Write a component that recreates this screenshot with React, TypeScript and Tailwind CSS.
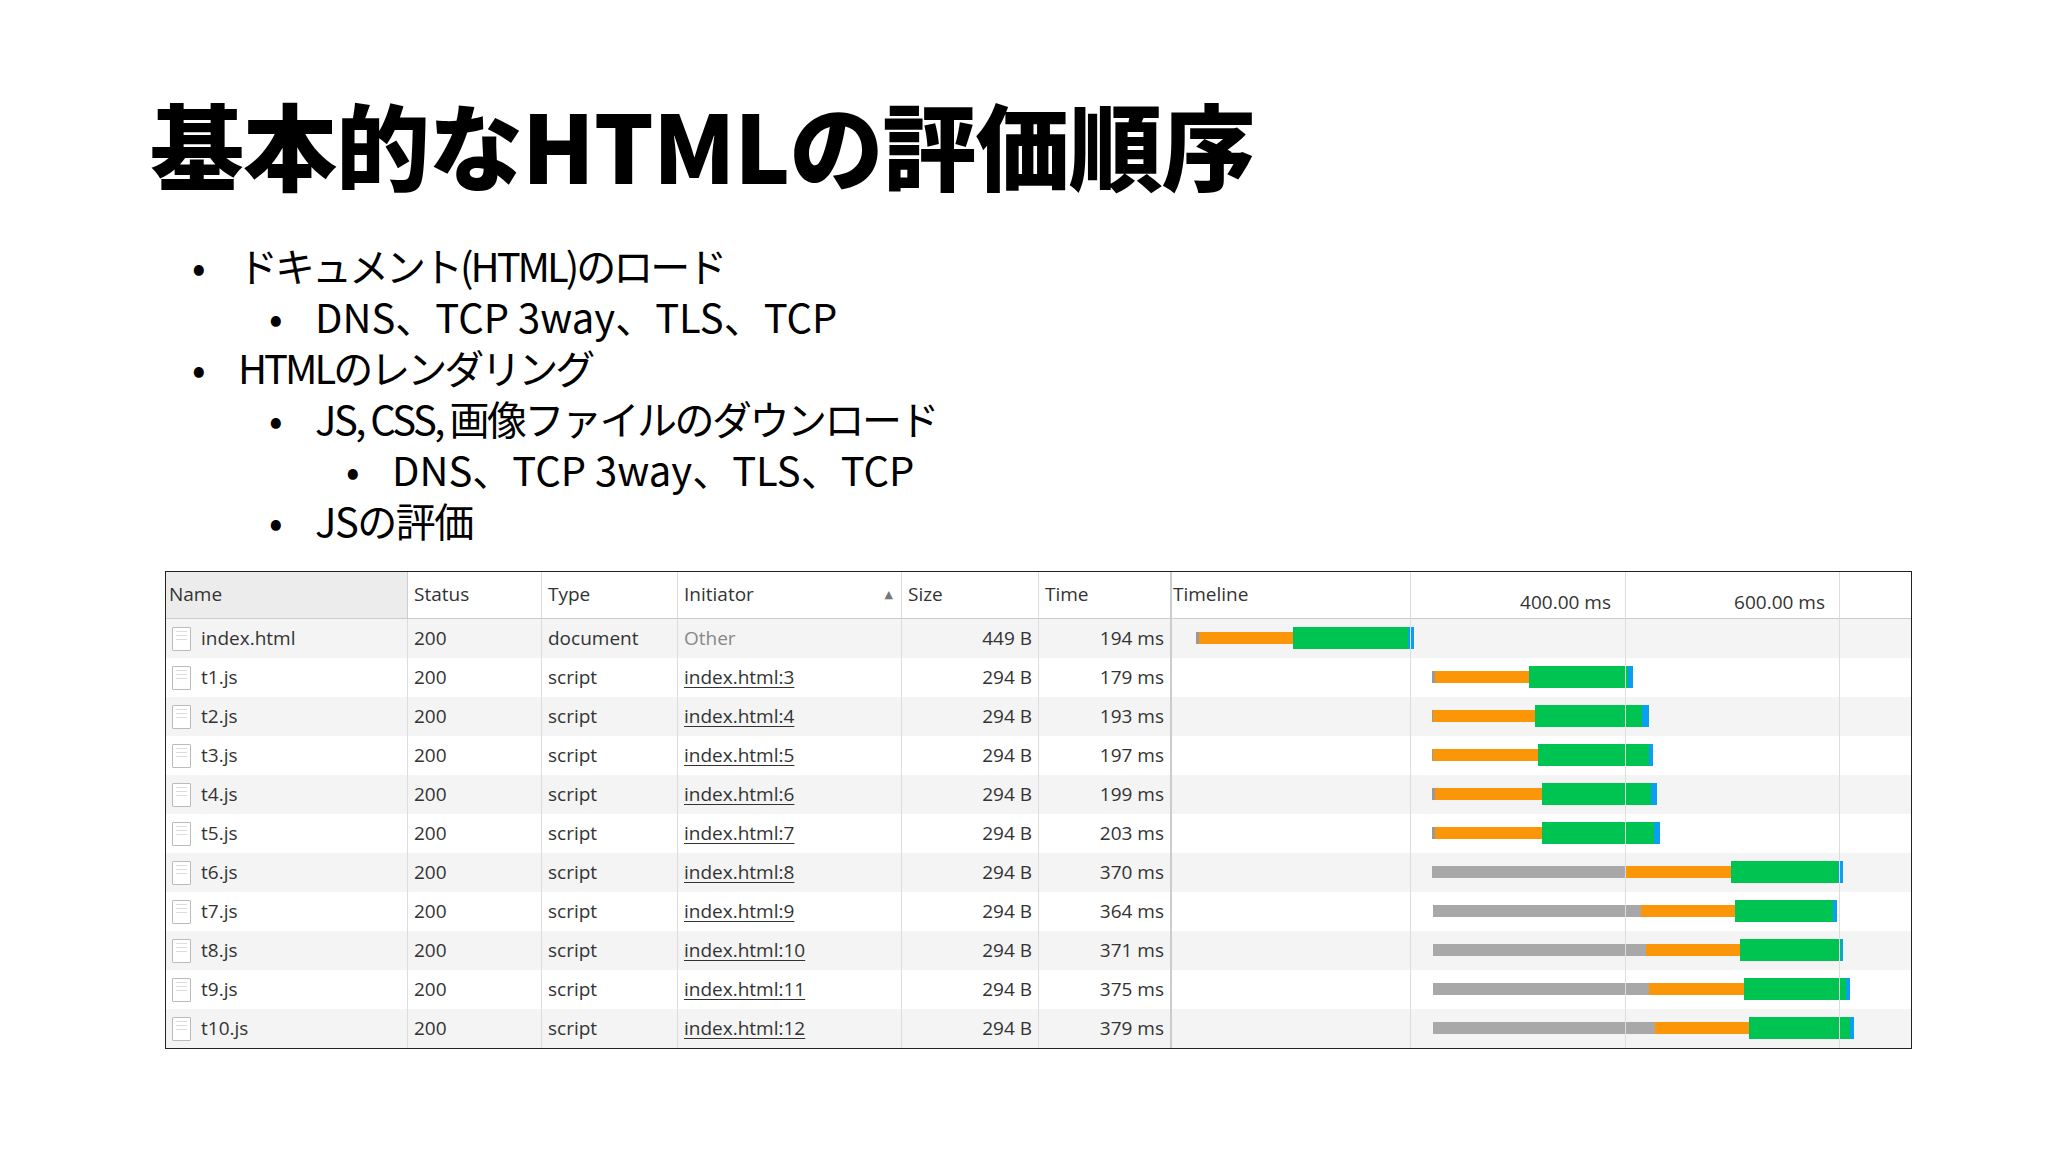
import React from "react";

const S = 1.306;
const rows = [
  { n: "index.html", t: "document", i: "Other", s: "449 B", tm: "194 ms", b: [915, 0, 918, 990, 1078, 1082] },
  { n: "t1.js", t: "script", i: "index.html:3", s: "294 B", tm: "179 ms", b: [1096, 0, 1098, 1170, 1246, 1250] },
  { n: "t2.js", t: "script", i: "index.html:4", s: "294 B", tm: "193 ms", b: [1096, 0, 1097, 1175, 1257, 1262] },
  { n: "t3.js", t: "script", i: "index.html:5", s: "294 B", tm: "197 ms", b: [1096, 0, 1097, 1177, 1262, 1265] },
  { n: "t4.js", t: "script", i: "index.html:6", s: "294 B", tm: "199 ms", b: [1096, 0, 1098, 1180, 1264, 1268] },
  { n: "t5.js", t: "script", i: "index.html:7", s: "294 B", tm: "203 ms", b: [1096, 0, 1098, 1180, 1266, 1271] },
  { n: "t6.js", t: "script", i: "index.html:8", s: "294 B", tm: "370 ms", b: [1096, 1, 1245, 1325, 1407, 1411] },
  { n: "t7.js", t: "script", i: "index.html:9", s: "294 B", tm: "364 ms", b: [1097, 1, 1256, 1328, 1403, 1406] },
  { n: "t8.js", t: "script", i: "index.html:10", s: "294 B", tm: "371 ms", b: [1097, 1, 1260, 1332, 1409, 1411] },
  { n: "t9.js", t: "script", i: "index.html:11", s: "294 B", tm: "375 ms", b: [1097, 1, 1262, 1335, 1413, 1416] },
  { n: "t10.js", t: "script", i: "index.html:12", s: "294 B", tm: "379 ms", b: [1097, 1, 1267, 1339, 1416, 1419] },
];
const X = (x: number) => (x - 897) * S;

function Bar({ b }: { b: number[] }) {
  const [st, grey, o, g, gEnd, bl] = b;
  return (
    <>
      <div className={`absolute ${grey ? "bg-[#a8a8a8]" : "bg-[#999]"}`} style={{ left: X(st), width: X(o) - X(st), top: 13, height: 12 }} />
      <div className="absolute bg-[#fb9608]" style={{ left: X(o), width: X(g) - X(o), top: 13, height: 12 }} />
      <div className="absolute bg-[#00c452]" style={{ left: X(g), width: X(gEnd) - X(g), top: 8, height: 22 }} />
      <div className="absolute bg-[#0a9ff0]" style={{ left: X(gEnd), width: X(bl) - X(gEnd), top: 8, height: 22 }} />
    </>
  );
}

const cols = "grid-cols-[242px_134px_136px_224px_137px_133px_1fr]";

const bullets: [number, number, string, number][] = [
  [196, 238, "ドキュメント(HTML)のロード", -3],
  [273, 315, "DNS、TCP 3way、TLS、TCP", 0],
  [196, 238, "HTMLのレンダリング", -3],
  [273, 315, "JS, CSS, 画像ファイルのダウンロード", -2.5],
  [350, 392, "DNS、TCP 3way、TLS、TCP", 0],
  [273, 315, "JSの評価", -1.5],
];

export default function App() {
  return (
    <div className="w-[2048px] h-[1152px] bg-white relative overflow-hidden" style={{ fontFamily: '"Noto Sans CJK JP", "Noto Sans", sans-serif' }}>
      <div className="absolute left-[150px] top-[96px] text-[94px] font-black leading-none tracking-[-1px] text-black">基本的なHTMLの評価順序</div>
      <div className="absolute left-0 top-[240px] text-[40px] text-black leading-[51px]">
        {bullets.map(([b, t, s, ls], i) => (
          <div key={i} className="relative h-[51px]">
            <span className="absolute" style={{ left: b - 4 }}>•</span>
            <span className="absolute whitespace-nowrap" style={{ left: t, letterSpacing: ls }}>{s}</span>
          </div>
        ))}
      </div>
      <div className="absolute left-[165px] top-[571px] w-[1747px] border border-[#222] text-[19px] text-[#333]" style={{ fontFamily: '"Open Sans", "DejaVu Sans", sans-serif' }}>
        <div className={`grid ${cols} h-[47px] border-b border-[#ccc]`}>
          <div className="bg-[#ececec] border-r border-[#ccc] pl-[3px] pt-[8px]">Name</div>
          <div className="border-r border-[#ddd] pl-[6px] pt-[8px]">Status</div>
          <div className="border-r border-[#ddd] pl-[6px] pt-[8px]">Type</div>
          <div className="border-r border-[#ddd] pl-[6px] pt-[8px] flex justify-between pr-[8px]"><span>Initiator</span><span className="text-[11px] text-[#777] pt-[6px]">▲</span></div>
          <div className="border-r border-[#ddd] pl-[6px] pt-[8px]">Size</div>
          <div className="border-r-2 border-[#ccc] pl-[6px] pt-[8px]">Time</div>
          <div className="relative pt-[8px]">
            <span className="pl-[1px]">Timeline</span>
            <span className="absolute top-[16px] right-[300px]">400.00 ms</span>
            <span className="absolute top-[16px] right-[86px]">600.00 ms</span>
          </div>
        </div>
        <div className="relative">
          {rows.map((r, i) => (
            <div key={i} className={`grid ${cols} h-[39px] items-center ${i % 2 === 0 ? "bg-[#f4f4f4]" : "bg-white"}`}>
              <div className="flex items-center h-full border-r border-[#ddd] pl-[6px] gap-[10px]">
                <div className="w-[19px] h-[24px] border border-[#bbb] bg-white rounded-[1px] flex flex-col gap-[3px] p-[3px]">
                  <div className="h-[1px] bg-[#ddd]" /><div className="h-[1px] bg-[#ddd]" /><div className="h-[1px] bg-[#ddd]" />
                </div>
                <span>{r.n}</span>
              </div>
              <div className="h-full flex items-center border-r border-[#ddd] pl-[6px]">200</div>
              <div className="h-full flex items-center border-r border-[#ddd] pl-[6px]">{r.t}</div>
              <div className={`h-full flex items-center border-r border-[#ddd] pl-[6px] ${i === 0 ? "text-[#888]" : "underline underline-offset-[3px]"}`}>{r.i}</div>
              <div className="h-full flex items-center justify-end border-r border-[#ddd] pr-[6px]">{r.s}</div>
              <div className="h-full flex items-center justify-end border-r-2 border-[#ccc] pr-[6px]">{r.tm}</div>
              <div className="h-full relative">
                <Bar b={r.b} />
              </div>
            </div>
          ))}
          <div className="absolute top-[-47px] bottom-0 bg-[#ddd] w-[1px]" style={{ left: 1171 - 165 + X(1079) }} />
          <div className="absolute top-[-47px] bottom-0 bg-[#ddd] w-[1px]" style={{ left: 1171 - 165 + X(1244) }} />
          <div className="absolute top-[-47px] bottom-0 bg-[#ddd] w-[1px]" style={{ left: 1171 - 165 + X(1408) }} />
        </div>
      </div>
    </div>
  );
}
